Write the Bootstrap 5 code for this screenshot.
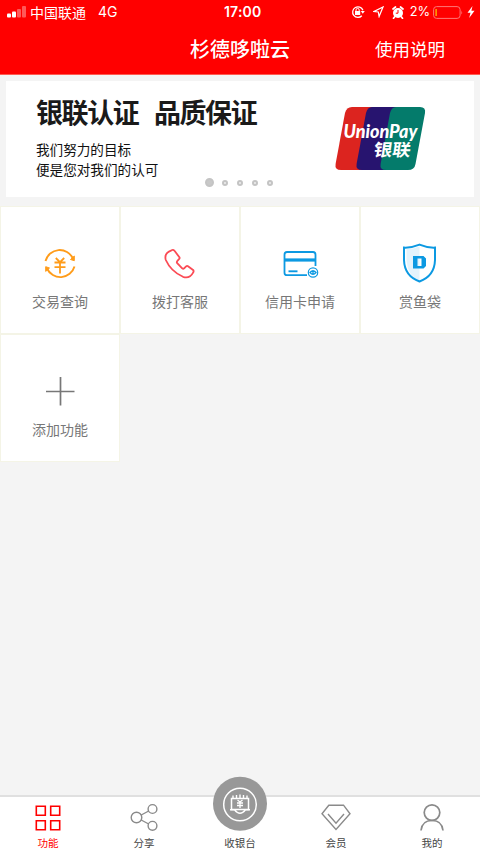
<!DOCTYPE html>
<html lang="zh-CN">
<head>
<meta charset="utf-8">
<meta name="viewport" content="width=device-width, initial-scale=1">
<title>杉德哆啦云</title>
<link href="https://cdn.jsdelivr.net/npm/bootstrap@5.3.0/dist/css/bootstrap.min.css" rel="stylesheet">
<style>
body{font-family:"Noto Sans CJK SC",sans-serif;background:#f4f4f4;height:853px;overflow:hidden}
svg{display:block;flex:none}
.topbar{background:#f00;height:75px;border-bottom:1px solid #ff5a50}
.statusbar{height:24px;font-size:14px;line-height:24px;padding:0 5px 0 7px}
.latin{font-family:Inter,"Liberation Sans",sans-serif}
.carrier{width:217px}
.network{margin-left:12px}
.battery-text{margin:0 3px 0 6px;font-size:12.8px}
.clock{font-weight:600;font-size:14px;letter-spacing:.2px}
.titlebar{height:50px}
.title-side{width:190px}
.titlebar h1{font-size:20px;font-weight:500;line-height:50px;white-space:nowrap}
.help{font-size:17.5px;line-height:50px;padding-right:35px}
.banner{height:116px;margin:6px 6px 9px;padding:16px 48px 0 30px}
.banner h2{font-size:27px;font-weight:700;line-height:30px;letter-spacing:-1.4px;color:#1a1a1a;margin-bottom:12px}
.banner h2 span+span{margin-left:15.5px}
.banner p{font-size:13.6px;line-height:20px;color:#111;font-weight:400}
.unionpay{margin-top:10px;overflow:visible}
.pager{bottom:10px;left:0;right:2px;gap:9px}
.pager i{width:6px;height:6px;border:2px solid #c4c4c4;border-radius:50%;background:#eee}
.pager i:first-child{width:9px;height:9px;background:#c8c8c8;margin-right:-1px}
.tile{height:128px;border:1px solid #f4f4e6;background:#fff;color:#777;font-size:14px;line-height:20px}
.tile svg{margin-top:33px;margin-bottom:5px}
.tabs{height:58px;border-top:2px solid #e0e0e0;font-size:10.5px;line-height:14px;color:#444}
.tab-item{width:20%}
.tab-item svg{margin-top:5px;margin-bottom:2px}
.tab-item .cashier{margin-top:-21px;margin-bottom:4px}
.active-tab{color:#f00}
</style>
<script src="https://cdn.jsdelivr.net/npm/bootstrap@5.3.0/dist/js/bootstrap.bundle.min.js"></script>
</head>
<body class="d-flex flex-column">
<header class="topbar text-white flex-shrink-0">
  <div class="statusbar d-flex align-items-center">
    <div class="carrier d-flex align-items-center">
      <svg width="19" height="12" fill="#fff"><rect y="7.500" width="4" height="4" rx="1"/><rect x="5" y="5.500" width="4" height="6" rx="1"/><g opacity=".35"><rect x="10" y="3" width="4" height="8.500" rx="1"/><rect x="15" y="0" width="4" height="11.500" rx="1"/></g></svg>
      <span class="ms-1">中国联通</span><span class="latin network">4G</span>
    </div>
    <span class="latin clock">17:00</span>
    <div class="d-flex align-items-center ms-auto">
      <svg width="14" height="14" viewBox="0 0 14 14" fill="none" stroke="#fff"><path d="M10.800 10.800A5.300 5.300 0 1 1 11.900 5.200" stroke-width="1.300"/><path d="M9.800 6h4l-2 2.800z" fill="#fff" stroke="none"/><rect x="4" y="6" width="5.200" height="4" fill="#fff" stroke="none"/><path d="M5 6.500V5a1.600 1.600 0 0 1 3.200 0v1.500"/></svg>
      <svg class="ms-2" width="11" height="12" viewBox="0 0 11 12"><path d="M10 1 6.100 10.500 5.300 6 1 5.500z" fill="none" stroke="#fff" stroke-width="1.200"/></svg>
      <svg class="ms-2" width="12" height="13" viewBox="0 0 12 13"><circle cx="6" cy="7" r="5" fill="#fff"/><path d="M1 3 3.500 1M11 3 8.500 1M2.500 11 1.500 12.300M9.500 11l1 1.300" stroke="#fff" stroke-width="1.700" stroke-linecap="round"/><path d="M6 4v3.200H3.800" stroke="#f00" fill="none"/></svg>
      <span class="latin battery-text">2%</span>
      <svg width="30" height="13" viewBox="0 0 30 13"><rect x=".6" y=".6" width="26.500" height="11.800" rx="3" fill="none" stroke="#ff7777"/><path d="M2.500 3h1.200v7H2.500z" fill="#ffd000"/><path d="M28.400 4.500q1.400 2 0 4z" fill="#ff7777"/></svg>
      <svg class="ms-1" width="8" height="12" viewBox="0 0 8 12"><path d="M5.500 0 .5 6.700h3L2.200 12l5.300-7.200H4.400z" fill="#fff"/></svg>
    </div>
  </div>
  <div class="titlebar d-flex align-items-center justify-content-between">
    <div class="title-side"></div><h1 class="m-0">杉德哆啦云</h1><div class="help title-side text-end">使用说明</div>
  </div>
</header>

<section class="banner bg-white position-relative d-flex justify-content-between flex-shrink-0">
  <div>
    <h2 class="d-flex"><span>银联认证</span><span>品质保证</span></h2>
    <p class="m-0">我们努力的目标</p>
    <p class="m-0">便是您对我们的认可</p>
  </div>
  <svg class="unionpay" width="91" height="63" viewBox="0 0 91 63">
    <path d="M17 0H40L30 63H6Q-.5 63 .6 57L10 6Q11.500 0 17 0Z" fill="#dc241f"/>
    <path d="M37 0H64L54 63H27Q20.500 63 21.600 57L31 6Q32.500 0 37 0Z" fill="#27146f"/>
    <path d="M61 0H85Q91 0 90 6L80.500 57Q79.500 63 73 63H51Q44.500 63 45.600 57L55 6Q56.500 0 61 0Z" fill="#047b6b"/>
    <g fill="#fff"><text x="8.500" y="31" font-family="Lato,sans-serif" font-weight="900" font-style="italic" font-size="19.500" textLength="74" lengthAdjust="spacingAndGlyphs">UnionPay</text>
    <text transform="translate(38 48.500) skewX(-8)" font-family="Noto Sans CJK SC,sans-serif" font-weight="700" font-size="17" textLength="37" lengthAdjust="spacingAndGlyphs">银联</text></g>
  </svg>
  <div class="pager position-absolute d-flex justify-content-center align-items-center"><i></i><i></i><i></i><i></i><i></i></div>
</section>

<main class="row row-cols-4 g-0 flex-grow-1 align-content-start">
  <div class="tile col d-flex flex-column align-items-center">
    <svg width="46" height="46" viewBox="0 0 46 46" fill="none" stroke="#ff9c1a" stroke-width="1.900"><path d="M8.500 21A14.700 14.700 0 0 1 36 18.500M37.500 26.500A14.700 14.700 0 0 1 10 28.500"/><path d="m33.500 19.500 3.800 1.200V16ZM12.500 28 8.700 26.700v4.700Z" fill="#ff9c1a" stroke-width="1"/><path d="m18.800 18 4.200 4.200 4.200-4.200M23 22v11.500M17.500 22.500h11M17.500 27.200h11" stroke-width="1.800"/></svg>
    <span>交易查询</span></div>
  <div class="tile col d-flex flex-column align-items-center">
    <svg width="46" height="46" viewBox="0 0 46 46" fill="none" stroke="#fb4b55" stroke-width="1.800" stroke-linejoin="round"><path d="M14.500 10.300q1.700-1 3.200.7l4.700 6.300q.6 1-.4 1.900l-1.800 2q-.8 1 0 2l5 5.200q1 .8 1.900 0l2-2q1-.9 1.900-.2l5.100 3.800q1 1 0 2.600-3.600 6.500-10.100 4.200Q14 31.500 8.800 20q-2-7 5.700-9.700Z"/></svg>
    <span>拨打客服</span></div>
  <div class="tile col d-flex flex-column align-items-center">
    <svg width="46" height="46" viewBox="0 0 46 46" fill="none" stroke="#0c99e2"><path d="M30 35.200H10q-2.500 0-2.500-2.500v-18Q7.500 12 10 12h26q2.500 0 2.500 2.700V26" stroke-width="1.800"/><path d="M8 20h30" stroke-width="3.200"/><path d="M11.500 31.300h9" stroke-width="1.900"/><circle cx="36" cy="32.500" r="4.700" stroke-width="1.200"/><path d="M33 32.500q3-3.500 6 0-3 3.500-6 0ZM36 30v5" stroke-width="1.300"/></svg>
    <span>信用卡申请</span></div>
  <div class="tile col d-flex flex-column align-items-center">
    <svg width="46" height="46" viewBox="0 0 46 46"><path d="M22.500 6.500Q16 9 9.500 9v12Q11 36 22.500 41Z" fill="#e3f3fc"/><path d="M22.500 4.700Q15 7.900 7 7.600V20Q7.500 36 22.500 41.500 37.500 36 38 20V7.600Q30 7.900 22.500 4.700Z" fill="none" stroke="#0c99e2" stroke-width="2"/><path fill-rule="evenodd" d="M16 16H26.500l2.500 2.500V26l-2.500 2.500H16ZM20.500 18.500V26h4V18.500Z" fill="#0c99e2"/></svg>
    <span>赏鱼袋</span></div>
  <div class="tile col d-flex flex-column align-items-center">
    <svg width="46" height="46" viewBox="0 0 46 46"><path d="M23.500 9v28.500M9 23.500h28.500" stroke="#777" stroke-width="1.700"/></svg>
    <span>添加功能</span></div>
</main>

<nav class="tabs bg-white d-flex flex-shrink-0">
  <div class="tab-item active-tab d-flex flex-column align-items-center">
    <svg width="32" height="32" viewBox="0 0 32 32" fill="none" stroke="#f00" stroke-width="1.600"><path d="M4.300 4.300h9v9h-9ZM18.700 4.300h9v9h-9ZM4.300 18.700h9v9h-9ZM18.700 18.700h9v9h-9Z"/></svg><span>功能</span></div>
  <div class="tab-item d-flex flex-column align-items-center">
    <svg width="32" height="32" viewBox="0 0 32 32" fill="none" stroke="#8a8a8a" stroke-width="1.400"><circle cx="8.500" cy="15.500" r="5.300"/><circle cx="24.500" cy="7" r="4.400"/><circle cx="24.500" cy="23.800" r="4.400"/><path d="m13.200 13 7.500-4M13.200 18l7.500 4"/></svg><span>分享</span></div>
  <div class="tab-item d-flex flex-column align-items-center">
    <svg class="cashier" width="54" height="56" viewBox="0 0 54 56"><circle cx="27" cy="27.700" r="27" fill="#989898"/><g fill="none" stroke="#fff"><circle cx="27" cy="28.500" r="16.300" stroke-width="1.500"/><rect x="18.500" y="22.500" width="17" height="11" stroke-width="1.500"/><path d="M17 33.700h4.500q5.500 7 11 0H37M20 22v-2.500M23.500 22v-3M27 22v-3.500M30.500 22v-3M34 22v-2.500" stroke-width="1.400"/><path d="m24.500 24 2.500 2 2.500-2M27 26v6M24 27h6M24 29.500h6" stroke-width="1.300"/></g></svg><span>收银台</span></div>
  <div class="tab-item d-flex flex-column align-items-center">
    <svg width="32" height="32" viewBox="0 0 32 32" fill="none" stroke="#8a8a8a" stroke-width="1.400"><path d="M8.800 3.200h14.700l6.500 8.600L16 27.500 2 11.800ZM8 12l8 9.300L24 12"/></svg><span>会员</span></div>
  <div class="tab-item d-flex flex-column align-items-center">
    <svg width="32" height="32" viewBox="0 0 32 32" fill="none" stroke="#8a8a8a" stroke-width="1.700"><circle cx="16" cy="10.600" r="7.800"/><path d="M5 28.500Q6 18.500 16 18.500T27 28.500"/></svg><span>我的</span></div>
</nav>
</body>
</html>
